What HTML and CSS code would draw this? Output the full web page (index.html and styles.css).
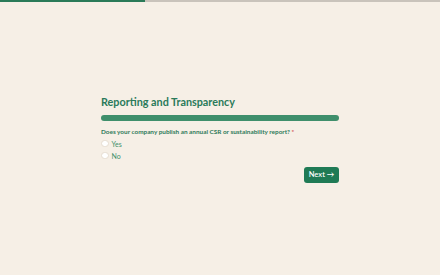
FILE: index.html
```html
<!DOCTYPE html>
<html>
<head>
<meta charset="utf-8">
<link rel="stylesheet" href="styles.css">
</head>
<body>
<div class="topbar"><div class="topbar-fill"></div></div>
<main class="page">
  <section class="form">
    <h1 class="title">Reporting and Transparency</h1>
    <div class="progress"></div>
    <p class="question">Does your company publish an annual CSR or sustainability report? <span class="req">*</span></p>
    <label class="option"><span class="radio"></span>Yes</label>
    <label class="option"><span class="radio"></span>No</label>
    <div class="actions"><button class="next">Next →</button></div>
  </section>
</main>
</body>
</html>
```
FILE: styles.css
```css
* { box-sizing: border-box; }
html, body { margin: 0; padding: 0; }
body {
  width: 440px;
  height: 275px;
  background: #f6efe6;
  font-family: "Lato", "Liberation Sans", sans-serif;
  display: flex;
  flex-direction: column;
}
.topbar {
  height: 2px;
  background: #c9c3bb;
  display: flex;
}
.topbar-fill {
  width: 145px;
  background: #2a7a58;
}
.page {
  flex: 1;
  display: flex;
  align-items: center;
  justify-content: center;
}
.form {
  width: 238px;
  display: flex;
  flex-direction: column;
}
.title {
  margin: 0;
  font-size: 10.8px;
  font-weight: 700;
  color: #2a7a5a;
  line-height: 14px;
}
.progress {
  margin-top: 6px;
  height: 6px;
  border-radius: 3px;
  background: #3f8f6c;
}
.question {
  margin: 6px 0 0;
  font-size: 6.4px;
  font-weight: 700;
  color: #2f7a5a;
  line-height: 10px;
}
.req { color: #d0474f; }
.option {
  display: flex;
  align-items: center;
  gap: 3px;
  font-size: 7px;
  color: #3f8f6c;
  line-height: 10px;
  margin-top: 2px;
}
.radio {
  width: 7.5px;
  height: 7.5px;
  border-radius: 50%;
  background: #ffffff;
  border: 0.5px solid #e6ddd1;
}
.actions {
  display: flex;
  justify-content: flex-end;
  margin-top: 6px;
}
.next {
  width: 35px;
  height: 16px;
  border: none;
  border-radius: 3px;
  background: #1f7a55;
  color: #fff;
  font-family: inherit;
  font-size: 7.5px;
  font-weight: 600;
  padding: 0;
}
```
